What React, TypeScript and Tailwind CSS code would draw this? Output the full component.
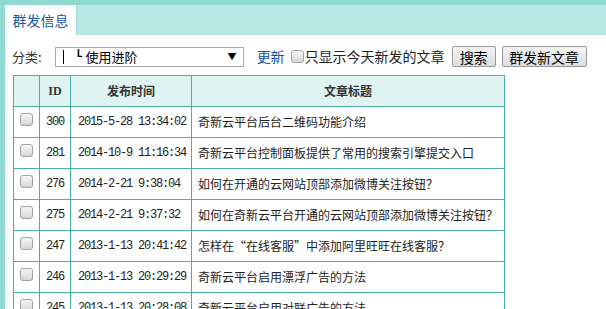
const rows = [
  { id: '300', time: '2015-5-28 13:34:02', title: '奇新云平台后台二维码功能介绍' },
  { id: '281', time: '2014-10-9 11:16:34', title: '奇新云平台控制面板提供了常用的搜索引擎提交入口' },
  { id: '276', time: '2014-2-21 9:38:04', title: '如何在开通的云网站顶部添加微博关注按钮？' },
  { id: '275', time: '2014-2-21 9:37:32', title: '如何在奇新云平台开通的云网站顶部添加微博关注按钮？' },
  { id: '247', time: '2013-1-13 20:41:42', title: '怎样在“在线客服”中添加阿里旺旺在线客服？' },
  { id: '246', time: '2013-1-13 20:29:29', title: '奇新云平台启用漂浮广告的方法' },
  { id: '245', time: '2013-1-13 20:28:08', title: '奇新云平台启用对联广告的方法' },
];

function Box({ className = '' }: { className?: string }) {
  return (
    <span
      className={`block w-[13px] h-[13px] rounded-[3px] border border-[#a3a3a3] bg-gradient-to-b from-[#f6f6f6] to-[#d6d6d6] ${className}`}
    />
  );
}

const mono = { fontFamily: '"Liberation Mono", monospace' };

export default function App() {
  return (
    <div
      className="h-screen overflow-hidden bg-[#90dad2] pl-[5px] pt-[5px] text-[#222]"
      style={{ fontFamily: '"Noto Sans CJK SC", "Noto Sans", sans-serif' }}
    >
      {/* tab strip */}
      <div className="flex h-[30px] bg-[#bae7e3]">
        <div className="flex w-[72px] items-center justify-center border-r border-[#a6dcd6] bg-white text-[14px] text-[#18579c]">
          群发信息
        </div>
      </div>

      <div className="h-full bg-white">
        {/* toolbar */}
        <div className="flex h-[40px] items-center pl-[7px] pt-[3px] text-[14px]">
          <span className="text-[13px] text-[#333]">分类:</span>
          <div className="ml-[13px] flex h-[20px] w-[189px] items-center border border-[#a9a9a9] bg-white pl-[7px] text-[13px] text-black">
            <span className="block h-[14px] w-px bg-black" />
            <span className="ml-[13px] -mt-[7px] text-[10px] font-bold leading-none">L</span>
            <span className="ml-[3px]">使用进阶</span>
            <span className="ml-auto mr-[6px] text-[9px] leading-none">▼</span>
          </div>
          <span className="ml-[13px] text-[#0f55a3]">更新</span>
          <Box className="ml-[6px]" />
          <span className="ml-px text-[#222]">只显示今天新发的文章</span>
          <button className="ml-[7px] h-[21px] w-[44px] rounded-[2px] border border-[#9a9a9a] bg-gradient-to-b from-[#f4f4f4] to-[#dedede] text-[14px] leading-none text-black">
            搜索
          </button>
          <button className="ml-[6px] h-[21px] w-[85px] rounded-[2px] border border-[#9a9a9a] bg-gradient-to-b from-[#f4f4f4] to-[#dedede] text-[14px] leading-none text-black">
            群发新文章
          </button>
        </div>

        {/* table */}
        <table className="ml-[8px] w-[492px] table-fixed border-collapse text-[12px]">
          <colgroup>
            <col className="w-[26px]" />
            <col className="w-[31px]" />
            <col className="w-[121px]" />
            <col />
          </colgroup>
          <thead>
            <tr className="h-[31px] bg-[#dff3f1] font-bold text-[#333]">
              <th className="border border-[#4cafa4]" />
              <th className="border border-[#4cafa4]" style={{ fontFamily: '"Liberation Serif", serif' }}>
                ID
              </th>
              <th className="border border-[#4cafa4]">发布时间</th>
              <th className="border border-[#4cafa4]">文章标题</th>
            </tr>
          </thead>
          <tbody>
            {rows.map((r) => (
              <tr key={r.id} className="h-[31px]">
                <td className="border border-[#4cafa4] align-top pt-[6px]">
                  <Box className="mx-auto" />
                </td>
                <td className="border border-[#4cafa4] pl-[6px] tracking-[-1.2px]" style={mono}>
                  {r.id}
                </td>
                <td className="whitespace-nowrap border border-[#4cafa4] pl-[7px] tracking-[-1.2px]" style={mono}>
                  {r.time}
                </td>
                <td className="whitespace-nowrap border border-[#4cafa4] pl-[6px]">{r.title}</td>
              </tr>
            ))}
          </tbody>
        </table>
      </div>
    </div>
  );
}
